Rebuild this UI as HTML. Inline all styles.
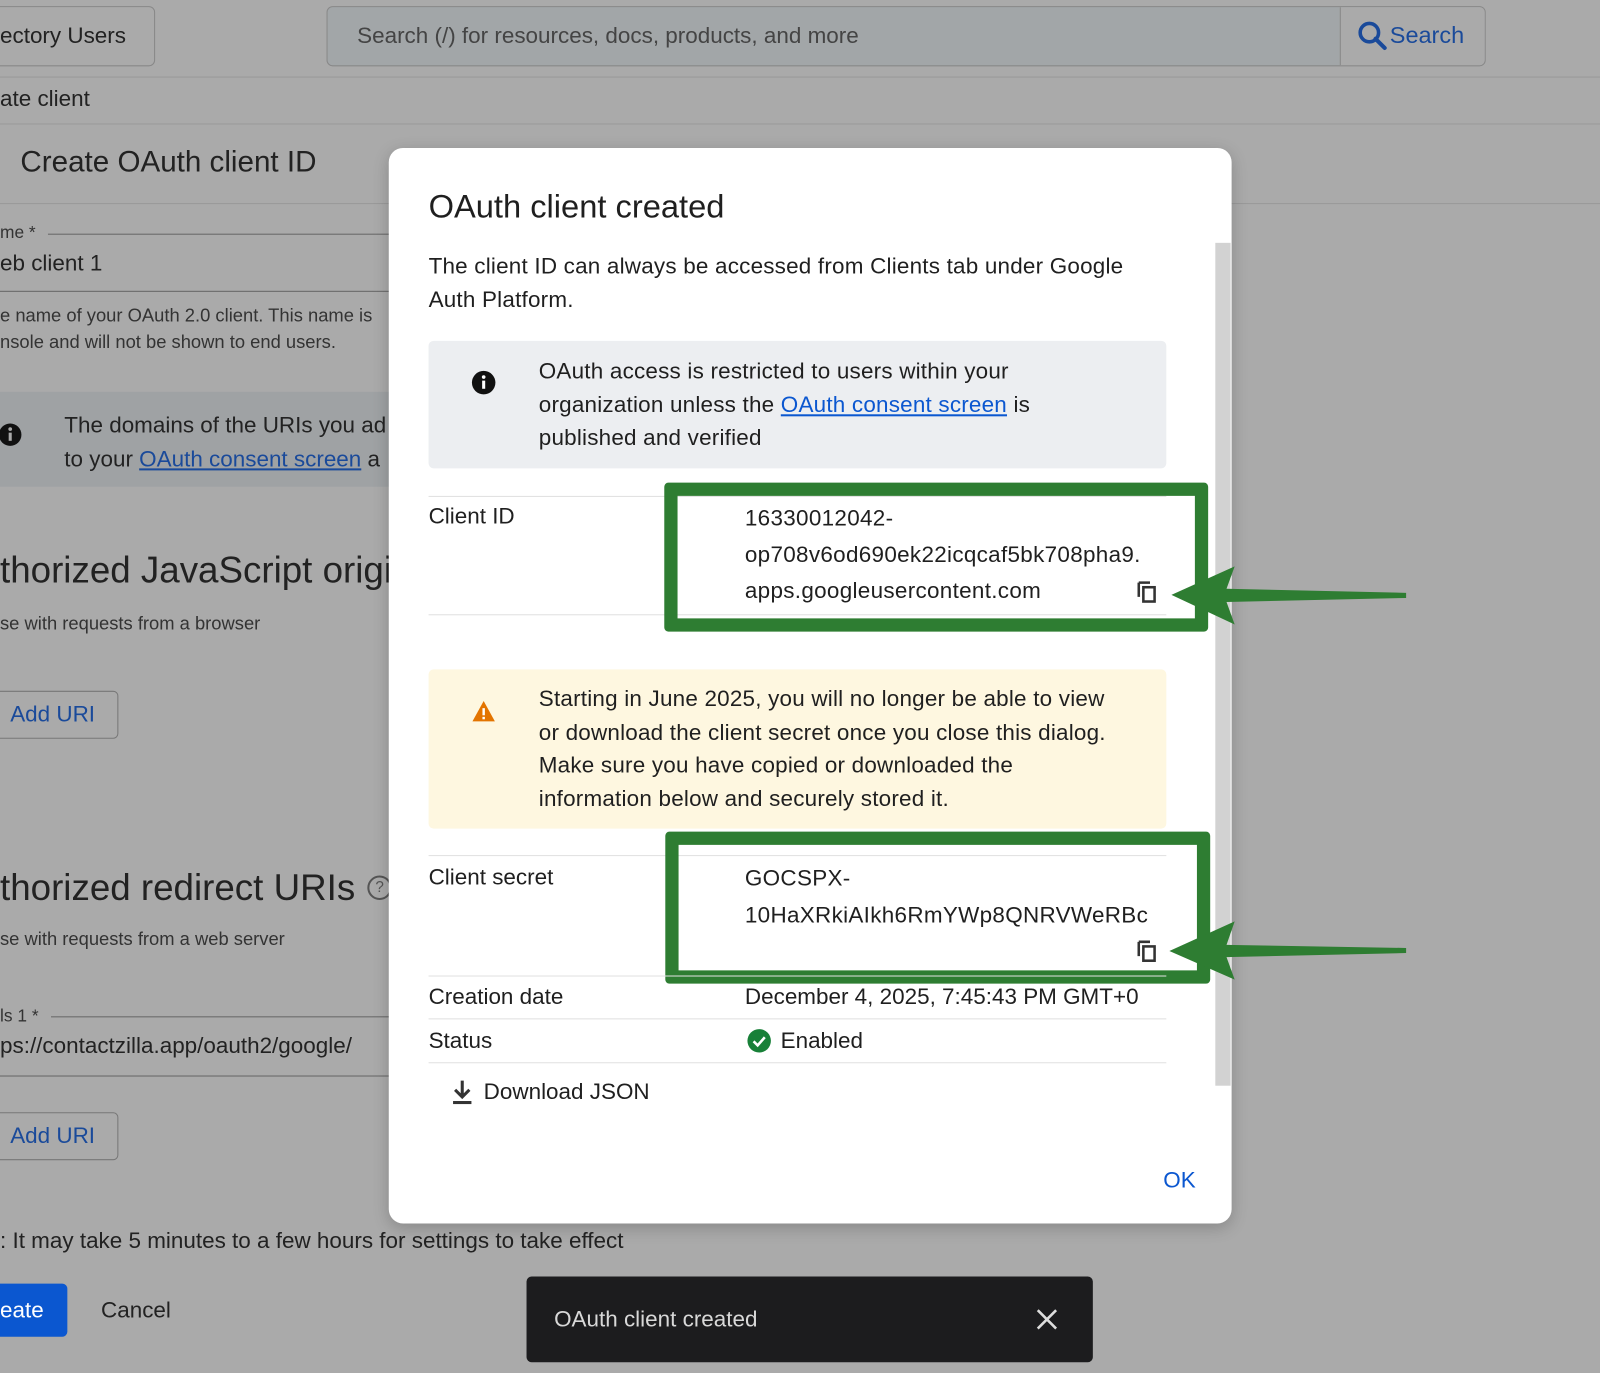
<!DOCTYPE html>
<html><head><meta charset="utf-8"><style>
html,body{margin:0;padding:0;width:1600px;height:1373px;overflow:hidden;background:#aaaaaa;}
#w{position:absolute;left:0;top:0;width:1568px;height:1346px;transform:scale(1.0204);transform-origin:0 0;font-family:"Liberation Sans",Arial,sans-serif;color:#1f1f1f;}
.a{position:absolute;white-space:nowrap;}
.bg{color:#222;}
.link{color:#0b57d0;text-decoration:underline;}
.lnk2{color:#1a4a9a;text-decoration:underline;}
.hr{position:absolute;height:1px;background:#999;}
.dhr{position:absolute;height:1px;background:#e0e0e0;}
.gb{position:absolute;border:13px solid #2e7d32;border-radius:4px;box-sizing:border-box;}
</style></head><body><div id="w">
<!-- background page -->
<div class="a" style="left:-10px;top:6px;width:160px;height:57px;border:1px solid #888;border-radius:6px;"></div>
<div class="a bg" style="left:0;top:22px;font-size:22px;">ectory Users</div>
<div class="a" style="left:320px;top:6px;width:1134px;height:57px;border:1px solid #888;border-radius:6px;background:#a2a6a8;overflow:hidden;">
 <div class="a" style="left:992px;top:0;width:142px;height:57px;background:#aaa;border-left:1px solid #888;"></div>
</div>
<div class="a" style="left:350px;top:22px;font-size:22px;color:#444;">Search (/) for resources, docs, products, and more</div>
<svg class="a" style="left:1330px;top:20px" width="30" height="30" viewBox="0 0 30 30"><circle cx="12" cy="12" r="9" fill="none" stroke="#1a4a9a" stroke-width="3.5"/><path d="M18 18l9 9" stroke="#1a4a9a" stroke-width="4" stroke-linecap="round"/></svg>
<div class="a" style="left:1362px;top:21px;font-size:23px;color:#1a4a9a;">Search</div>
<div class="hr" style="left:0;top:75px;width:1568px;"></div>
<div class="a bg" style="left:0;top:84px;font-size:22px;">ate client</div>
<div class="hr" style="left:0;top:121px;width:1568px;"></div>
<div class="a bg" style="left:20px;top:143px;font-size:29px;">Create OAuth client ID</div>
<div class="hr" style="left:0;top:199px;width:1568px;"></div>
<div class="a" style="left:0;top:218px;font-size:17px;color:#333;">me *</div>
<div class="hr" style="left:47px;top:229px;width:340px;background:#666;"></div>
<div class="a bg" style="left:0;top:245px;font-size:22px;">eb client 1</div>
<div class="hr" style="left:0;top:285px;width:390px;background:#666;"></div>
<div class="a" style="left:0;top:296px;font-size:18px;color:#333;line-height:26px;">e name of your OAuth 2.0 client. This name is<br>nsole and will not be shown to end users.</div>
<div class="a" style="left:0;top:384px;width:390px;height:93px;background:#9fa2a4;"></div>
<svg class="a" style="left:0;top:414px" width="22" height="24" viewBox="0 0 22 24"><circle cx="10" cy="12" r="11" fill="#111"/><rect x="8.5" y="10" width="3" height="8" fill="#aaa"/><circle cx="10" cy="6.5" r="1.8" fill="#aaa"/></svg>
<div class="a bg" style="left:63px;top:400px;font-size:22px;line-height:33px;">The domains of the URIs you ad<br>to your <span class="lnk2">OAuth consent screen</span> a</div>
<div class="a bg" style="left:0;top:538px;font-size:36px;">thorized JavaScript origi</div>
<div class="a" style="left:0;top:601px;font-size:18px;color:#333;">se with requests from a browser</div>
<div class="a" style="left:-10px;top:677px;width:124px;height:45px;border:1px solid #777;border-radius:5px;"></div>
<div class="a" style="left:10px;top:687px;font-size:22px;color:#1a4a9a;">Add URI</div>
<div class="a bg" style="left:0;top:849px;font-size:36px;">thorized redirect URIs</div>
<div class="a" style="left:360px;top:858px;width:20px;height:20px;border:2px solid #555;border-radius:50%;font-size:15px;text-align:center;line-height:20px;color:#555;">?</div>
<div class="a" style="left:0;top:910px;font-size:18px;color:#333;">se with requests from a web server</div>
<div class="a" style="left:0;top:986px;font-size:17px;color:#333;">ls 1 *</div>
<div class="hr" style="left:50px;top:996px;width:340px;background:#666;"></div>
<div class="a bg" style="left:0;top:1012px;font-size:22px;">ps://contactzilla.app/oauth2/google/</div>
<div class="hr" style="left:0;top:1054px;width:390px;background:#666;"></div>
<div class="a" style="left:-10px;top:1090px;width:124px;height:45px;border:1px solid #777;border-radius:5px;"></div>
<div class="a" style="left:10px;top:1100px;font-size:22px;color:#1a4a9a;">Add URI</div>
<div class="a bg" style="left:0;top:1203px;font-size:22px;">: It may take 5 minutes to a few hours for settings to take effect</div>
<div class="a" style="left:-10px;top:1258px;width:76px;height:52px;background:#0b57d0;border-radius:5px;"></div>
<div class="a" style="left:0;top:1271px;font-size:22px;color:#fff;">eate</div>
<div class="a bg" style="left:99px;top:1271px;font-size:22px;">Cancel</div>
<!-- snackbar -->
<div class="a" style="left:516px;top:1251px;width:555px;height:84px;background:#1c1c1e;border-radius:5px;"></div>
<div class="a" style="left:543px;top:1280px;font-size:22px;color:#d8d8d8;">OAuth client created</div>
<svg class="a" style="left:1015px;top:1282px" width="22" height="22" viewBox="0 0 22 22"><path d="M2 2L20 20M20 2L2 20" stroke="#ddd" stroke-width="2.5"/></svg>
<!-- dialog -->
<div class="a" style="left:381px;top:145px;width:826px;height:1054px;background:#fff;border-radius:14px;box-shadow:0 4px 16px rgba(0,0,0,.2);"></div>
<div class="a" style="left:1191px;top:238px;width:15px;height:826px;background:#d2d2d2;"></div>
<div class="a" style="left:420px;top:184px;font-size:32px;">OAuth client created</div>
<div class="a" style="left:420px;top:244px;font-size:22px;line-height:33px;letter-spacing:.2px;">The client ID can always be accessed from Clients tab under Google<br>Auth Platform.</div>
<div class="a" style="left:420px;top:334px;width:723px;height:125px;background:#eceef1;border-radius:5px;"></div>
<svg class="a" style="left:462px;top:363px" width="24" height="24" viewBox="0 0 24 24"><circle cx="12" cy="12" r="11.5" fill="#111"/><rect x="10.5" y="10" width="3" height="8" fill="#fff"/><circle cx="12" cy="6.5" r="1.8" fill="#fff"/></svg>
<div class="a" style="left:528px;top:348px;font-size:22px;line-height:32.5px;letter-spacing:.2px;">OAuth access is restricted to users within your<br>organization unless the <span class="link">OAuth consent screen</span> is<br>published and verified</div>
<div class="dhr" style="left:420px;top:486px;width:723px;"></div>
<div class="a" style="left:420px;top:493px;font-size:22px;">Client ID</div>
<div class="a" style="left:730px;top:490px;font-size:22px;line-height:35.5px;letter-spacing:.3px;">16330012042-<br>op708v6od690ek22icqcaf5bk708pha9.<br>apps.googleusercontent.com</div>
<svg class="a" style="left:1113px;top:568px" width="22" height="24" viewBox="0 0 22 24"><path d="M3 3h11M3 3v14" stroke="#333" stroke-width="2.5" fill="none"/><rect x="7.5" y="7.5" width="11" height="14" fill="none" stroke="#333" stroke-width="2.5"/></svg>
<div class="dhr" style="left:420px;top:602px;width:723px;"></div>
<div class="gb" style="left:651px;top:473px;width:533px;height:146px;"></div>
<div class="a" style="left:420px;top:656px;width:723px;height:156px;background:#fef7e0;border-radius:5px;"></div>
<svg class="a" style="left:462px;top:686px" width="24" height="22" viewBox="0 0 24 22"><path d="M12 1L23 21H1z" fill="#e37400"/><rect x="10.8" y="8" width="2.4" height="7" fill="#fff"/><rect x="10.8" y="16.5" width="2.4" height="2.4" fill="#fff"/></svg>
<div class="a" style="left:528px;top:669px;font-size:22px;line-height:32.5px;letter-spacing:.2px;">Starting in June 2025, you will no longer be able to view<br>or download the client secret once you close this dialog.<br>Make sure you have copied or downloaded the<br>information below and securely stored it.</div>
<div class="dhr" style="left:420px;top:838px;width:723px;"></div>
<div class="a" style="left:420px;top:847px;font-size:22px;">Client secret</div>
<div class="a" style="left:730px;top:843px;font-size:22px;line-height:35.5px;letter-spacing:.3px;">GOCSPX-<br>10HaXRkiAIkh6RmYWp8QNRVWeRBc</div>
<svg class="a" style="left:1113px;top:920px" width="22" height="24" viewBox="0 0 22 24"><path d="M3 3h11M3 3v14" stroke="#333" stroke-width="2.5" fill="none"/><rect x="7.5" y="7.5" width="11" height="14" fill="none" stroke="#333" stroke-width="2.5"/></svg>
<div class="gb" style="left:652px;top:815px;width:534px;height:149px;"></div>
<div class="dhr" style="left:420px;top:956px;width:723px;"></div>
<div class="a" style="left:420px;top:964px;font-size:22px;">Creation date</div>
<div class="a" style="left:730px;top:964px;font-size:22px;">December 4, 2025, 7:45:43 PM GMT+0</div>
<div class="dhr" style="left:420px;top:998px;width:723px;"></div>
<div class="a" style="left:420px;top:1007px;font-size:22px;">Status</div>
<svg class="a" style="left:732px;top:1008px" width="24" height="24" viewBox="0 0 24 24"><circle cx="12" cy="12" r="11.5" fill="#188038"/><path d="M6.5 12.5l4 4 7-8" stroke="#fff" stroke-width="2.5" fill="none"/></svg>
<div class="a" style="left:765px;top:1007px;font-size:22px;">Enabled</div>
<div class="dhr" style="left:420px;top:1041px;width:723px;"></div>
<svg class="a" style="left:442px;top:1058px" width="22" height="26" viewBox="0 0 22 26"><path d="M11 1v15M4 10l7 7 7-7" stroke="#333" stroke-width="3" fill="none"/><rect x="2" y="21" width="18" height="3" fill="#333"/></svg>
<div class="a" style="left:474px;top:1057px;font-size:22px;">Download JSON</div>
<div class="a" style="left:1140px;top:1144px;font-size:22px;color:#0b57d0;">OK</div>
<!-- arrows -->
<svg class="a" style="left:1140px;top:550px" width="250" height="70" viewBox="0 0 250 70"><path d="M8 33L70 5L62 27L238 31L238 36L62 40L70 62Z" fill="#2e7d32"/></svg>
<svg class="a" style="left:1140px;top:898px" width="250" height="70" viewBox="0 0 250 70"><path d="M6 34L70 5L62 28L238 31L238 36L62 40L70 62Z" fill="#2e7d32"/></svg>
</div></body></html>
